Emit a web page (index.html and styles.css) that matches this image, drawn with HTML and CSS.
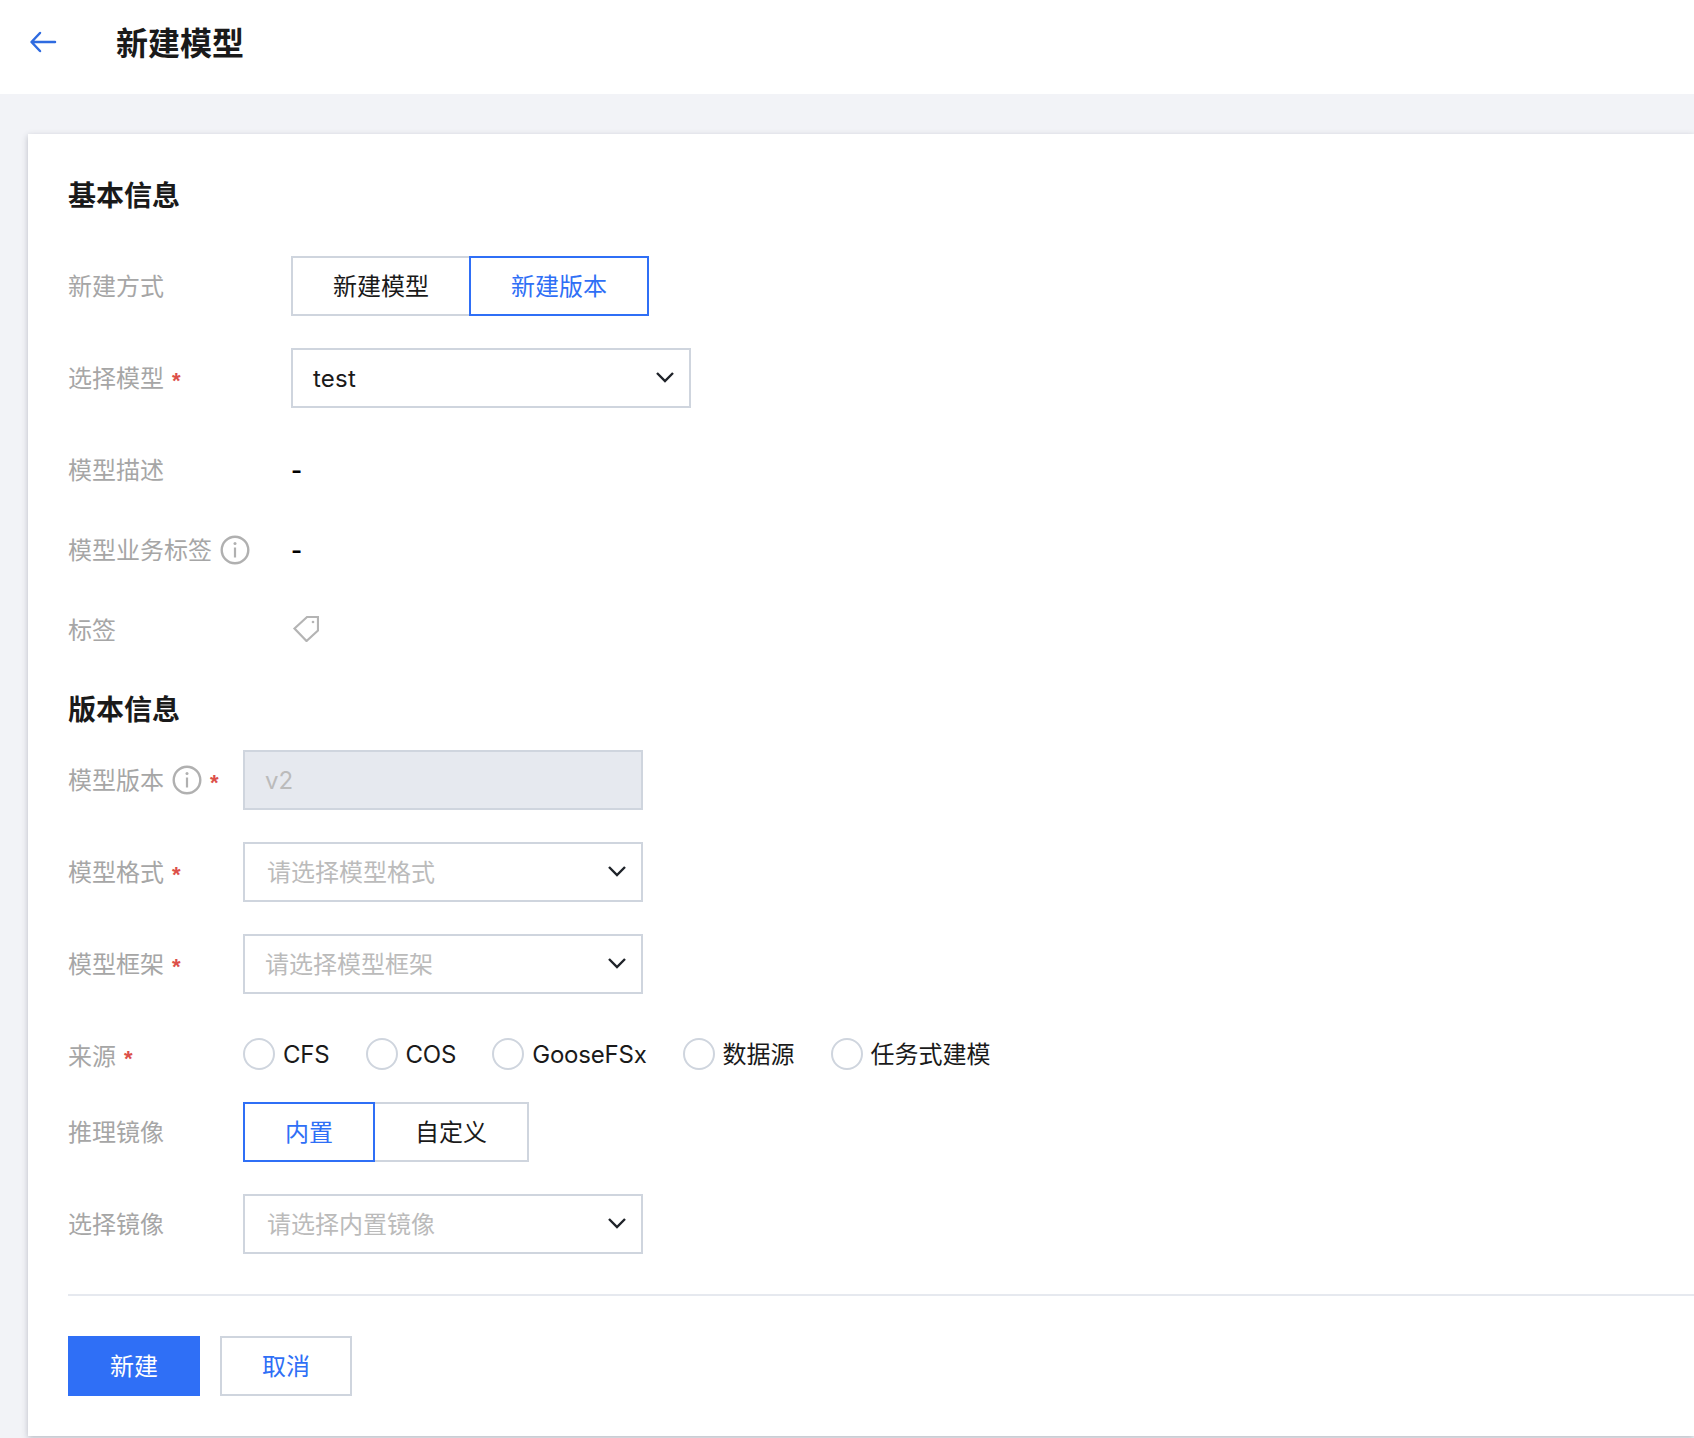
FILE: index.html
```html
<!DOCTYPE html>
<html lang="zh-CN">
<head>
<meta charset="utf-8">
<title>新建模型</title>
<link rel="stylesheet" href="styles.css">
</head>
<body>
<header class="topbar">
  <svg class="back" width="28" height="22" viewBox="0 0 28 22" fill="none"><path d="M26 11H3M11 2 2.500 11l8.500 9" stroke="#2f6be0" stroke-width="2.500" stroke-linecap="round" stroke-linejoin="round"/></svg>
  <h1 class="title">新建模型</h1>
</header>
<main class="page">
  <section class="card">
    <h2 class="heading">基本信息</h2>
    <div class="row wide">
      <div class="label"><span class="txt">新建方式</span></div>
      <div class="seg"><button class="seg-btn">新建模型</button><button class="seg-btn on">新建版本</button></div>
    </div>
    <div class="row wide">
      <div class="label"><span class="txt">选择模型</span><span class="req">*</span></div>
      <div class="select"><span class="val">test</span><svg class="chev" width="18" height="11" viewBox="0 0 18 11" fill="none"><path d="M1 1l8 8 8-8" stroke="#1f2329" stroke-width="2.400"/></svg></div>
    </div>
    <div class="row wide tight">
      <div class="label"><span class="txt">模型描述</span></div>
      <div class="val dash">-</div>
    </div>
    <div class="row wide tight">
      <div class="label"><span class="txt">模型业务标签</span><svg class="info" width="30" height="30" viewBox="0 0 30 30" fill="none"><circle cx="15" cy="15" r="13.300" stroke="#b0b0b0" stroke-width="2.400"/><path d="M15 12.500v10" stroke="#b0b0b0" stroke-width="2.200"/><circle cx="15" cy="8.500" r="1.500" fill="#b0b0b0"/></svg></div>
      <div class="val dash">-</div>
    </div>
    <div class="row wide last">
      <div class="label"><span class="txt">标签</span></div>
      <svg class="tag" width="28" height="28" viewBox="0 0 28 28" fill="none"><path d="M16 3h11v13.500L15.500 27 3.500 14.500z" stroke="#b4b4b4" stroke-width="2.200"/><circle cx="22" cy="8" r="1.300" fill="#b4b4b4"/></svg>
    </div>
    <h2 class="heading second">版本信息</h2>
    <div class="row">
      <div class="label"><span class="txt">模型版本</span><svg class="info" width="30" height="30" viewBox="0 0 30 30" fill="none"><circle cx="15" cy="15" r="13.300" stroke="#b0b0b0" stroke-width="2.400"/><path d="M15 12.500v10" stroke="#b0b0b0" stroke-width="2.200"/><circle cx="15" cy="8.500" r="1.500" fill="#b0b0b0"/></svg><span class="req">*</span></div>
      <div class="select off"><span class="muted">v2</span></div>
    </div>
    <div class="row">
      <div class="label"><span class="txt">模型格式</span><span class="req">*</span></div>
      <div class="select inset"><span class="muted txt">请选择模型格式</span><svg class="chev" width="18" height="11" viewBox="0 0 18 11" fill="none"><path d="M1 1l8 8 8-8" stroke="#1f2329" stroke-width="2.400"/></svg></div>
    </div>
    <div class="row">
      <div class="label"><span class="txt">模型框架</span><span class="req">*</span></div>
      <div class="select"><span class="muted txt">请选择模型框架</span><svg class="chev" width="18" height="11" viewBox="0 0 18 11" fill="none"><path d="M1 1l8 8 8-8" stroke="#1f2329" stroke-width="2.400"/></svg></div>
    </div>
    <div class="row radio-row">
      <div class="label"><span class="txt">来源</span><span class="req">*</span></div>
      <div class="radios">
        <label class="radio latin"><span class="dot"></span>CFS</label>
        <label class="radio latin"><span class="dot"></span>COS</label>
        <label class="radio latin"><span class="dot"></span>GooseFSx</label>
        <label class="radio"><span class="dot"></span><span class="txt">数据源</span></label>
        <label class="radio"><span class="dot"></span><span class="txt">任务式建模</span></label>
      </div>
    </div>
    <div class="row">
      <div class="label"><span class="txt">推理镜像</span></div>
      <div class="seg"><button class="seg-btn on">内置</button><button class="seg-btn">自定义</button></div>
    </div>
    <div class="row end">
      <div class="label"><span class="txt">选择镜像</span></div>
      <div class="select inset"><span class="muted txt">请选择内置镜像</span><svg class="chev" width="18" height="11" viewBox="0 0 18 11" fill="none"><path d="M1 1l8 8 8-8" stroke="#1f2329" stroke-width="2.400"/></svg></div>
    </div>
    <div class="actions">
      <button class="btn primary">新建</button>
      <button class="btn">取消</button>
    </div>
  </section>
</main>
</body>
</html>
```
FILE: styles.css
```css
* { box-sizing: border-box; }
html, body { margin: 0; height: 100%; }
body {
  background: #f2f3f7;
  color: #1a1a1a;
  font-family: "Noto Sans CJK SC", "Inter", sans-serif;
  font-size: 24px;
  overflow: hidden;
}
.topbar {
  height: 94px;
  background: #fff;
  display: flex;
  align-items: center;
  padding-left: 29px;
}
.back { margin-right: 59px; margin-top: -10px; }
.title {
  margin: -12px 0 0;
  font-size: 32px;
  font-weight: 700;
  line-height: 44px;
}
.page { padding: 40px 0 0 28px; }
.card {
  background: #fff;
  padding: 40px 0 40px 40px;
  box-shadow: 0 2px 6px rgba(54, 58, 80, .3);
}
.heading {
  margin: 0 0 40px;
  padding-bottom: 2px;
  font-size: 28px;
  font-weight: 700;
  line-height: 40px;
}
.heading.second { margin-bottom: 20px; }
.row {
  display: flex;
  align-items: center;
  min-height: 60px;
  margin-bottom: 32px;
}
.row.tight { margin-bottom: 20px; }
.row.last { margin-bottom: 28px; }
.row.radio-row { margin-bottom: 16px; }
.row.end { margin-bottom: 0; }
.label {
  width: 175px;
  flex: none;
  display: flex;
  align-items: center;
  color: #a6a6a6;
  white-space: nowrap;
}
.wide .label { width: 223px; }
.txt { padding-bottom: 4px; }
.req {
  margin-left: 8px;
  color: #dc4f4a;
  font-family: "Liberation Sans", sans-serif;
  font-size: 22px;
  font-weight: 700;
  line-height: 1;
  padding-top: 5px;
}
.info { margin-left: 8px; flex: none; }
.val {
  font-family: "Inter", "Noto Sans CJK SC", sans-serif;
  letter-spacing: .2px;
}
.val.dash { font-weight: 600; color: #000; }
.tag { margin-top: -4px; }
.seg { display: flex; }
.seg-btn {
  height: 60px;
  padding: 0 40px 4px;
  background: #fff;
  border: 2px solid #cfd5de;
  color: #1a1a1a;
  font: inherit;
}
.seg-btn + .seg-btn { margin-left: -2px; }
.seg-btn.on {
  position: relative;
  border-color: #2f6ff6;
  color: #2f6ff6;
}
.select {
  width: 400px;
  height: 60px;
  border: 2px solid #cfd5de;
  display: flex;
  align-items: center;
  justify-content: space-between;
  padding: 0 15px 0 20px;
}
.select.inset { padding-left: 22px; }
.select.off { background: #e6e9ef; }
.chev { flex: none; margin-top: -2px; }
.muted { color: #bbbbbb; font-family: "Inter", "Noto Sans CJK SC", sans-serif; }
.radios {
  display: flex;
  gap: 36px;
  margin-bottom: 4px;
}
.radio {
  display: flex;
  align-items: center;
  gap: 8px;
}
.radio.latin {
  font-family: "Inter", "Noto Sans CJK SC", sans-serif;
  letter-spacing: -.2px;
}
.dot {
  width: 32px;
  height: 32px;
  border: 2px solid #cfd5de;
  border-radius: 50%;
  background: #fff;
}
.actions {
  margin-top: 40px;
  padding-top: 40px;
  border-top: 2px solid #e6e9ef;
  display: flex;
  gap: 20px;
}
.btn {
  height: 60px;
  padding: 0 40px 4px;
  background: #fff;
  border: 2px solid #cfd5de;
  color: #2f6ff6;
  font: inherit;
}
.btn.primary {
  background: #2f6ff6;
  border-color: #2f6ff6;
  color: #fff;
}
```
